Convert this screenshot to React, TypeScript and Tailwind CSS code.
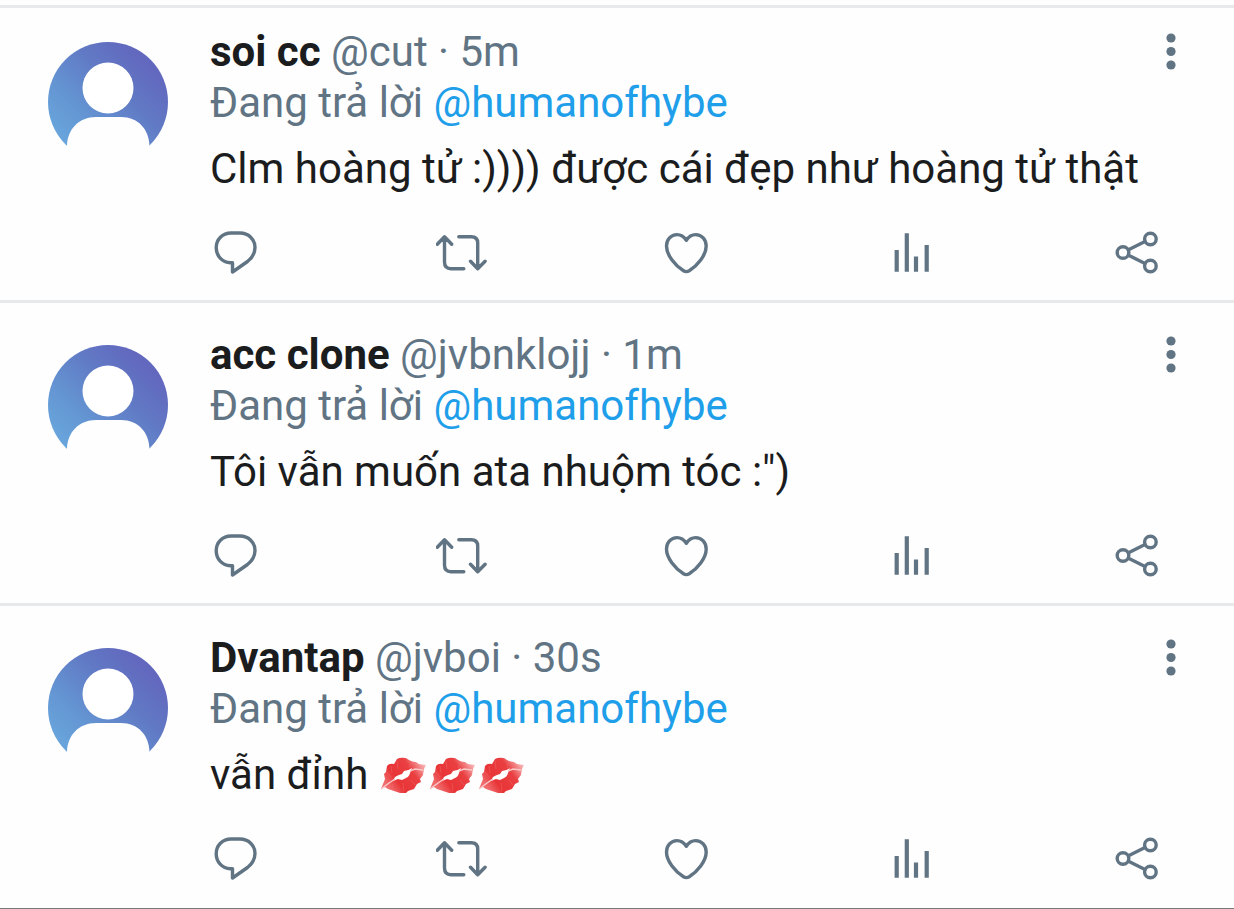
import type { ReactNode } from "react";

type Tweet = {
  id: string;
  name: string;
  handle: string;
  time: string;
  text: string;
  kisses?: number;
};

const REPLY_TO = "@humanofhybe";

const tweets: Tweet[] = [
  { id: "t1", name: "soi cc", handle: "@cut", time: "5m", text: "Clm hoàng tử :)))) được cái đẹp như hoàng tử thật" },
  { id: "t2", name: "acc clone", handle: "@jvbnklojj", time: "1m", text: "Tôi vẫn muốn ata nhuộm tóc :\")" },
  { id: "t3", name: "Dvantap", handle: "@jvboi", time: "30s", text: "vẫn đỉnh", kisses: 3 },
];

function Avatar({ id }: { id: string }) {
  return (
    <svg viewBox="0 0 120 120" className="size-[120px] shrink-0" aria-hidden="true">
      <defs>
        <linearGradient id={`bg-${id}`} x1="0" y1="0.85" x2="0.75" y2="0.1">
          <stop offset="0" stopColor="#6aabdf" />
          <stop offset="0.35" stopColor="#6496d3" />
          <stop offset="0.7" stopColor="#617ac5" />
          <stop offset="1" stopColor="#6268be" />
        </linearGradient>
        <clipPath id={`clip-${id}`}>
          <path d="M0 0H120V104H101.5C101 87 90 75 73 75H48C31 75 19.5 87 19 104H0Z" />
        </clipPath>
      </defs>
      <circle cx="60" cy="60" r="60" fill={`url(#bg-${id})`} clipPath={`url(#clip-${id})`} />
      <circle cx="60" cy="46" r="25.5" fill="#fff" />
    </svg>
  );
}

function KissMark({ id }: { id: string }) {
  return (
    <svg viewBox="0 0 46 38" className="h-[38px] w-[46px]" role="img" aria-label="kiss mark">
      <defs>
        <linearGradient id={id} x1="0.1" y1="0.7" x2="1" y2="0.2">
          <stop offset="0" stopColor="#f06b6c" />
          <stop offset="0.25" stopColor="#e83437" />
          <stop offset="0.65" stopColor="#ea3f41" />
          <stop offset="1" stopColor="#f9c4c4" />
        </linearGradient>
      </defs>
      <path
        d="M1 33L3 28L5 23L4 18L6 16L7 10Q9 7 14 8L17 3Q20 1 26 2L29 4Q32 6 36 6L39 8L46 9L44 13L43 19L40 23L41 26L37 28L34 33L28 35L26 37L20 37L14 35L8 33L5 31Z"
        fill={`url(#${id})`}
      />
      <path d="M13 25L15 21Q18 19 22 18L24 15Q28 15 32 12L30 17Q29 21 26 22L22 24L18 23Z" fill="#fff" />
      <path d="M1 33L9 27L15 23M30 15L35 13L43 14" fill="none" stroke="#f9c8c8" strokeWidth="1.5" />
      <path d="M11 10L12 17M17 5L18 13M31 6L29 12M13 28L12 33M23 27L24 35M31 24L35 29M7 16L11 21" stroke="#f06a6a" strokeWidth="1" opacity="0.5" />
    </svg>
  );
}

function ActionButton({ label, children }: { label: string; children: ReactNode }) {
  return (
    <button type="button" aria-label={label} className="size-[52px]">
      <svg
        viewBox="0 0 52 52"
        className="size-full"
        fill="none"
        stroke="currentColor"
        strokeWidth="3.4"
        strokeLinecap="round"
        strokeLinejoin="round"
        aria-hidden="true"
      >
        {children}
      </svg>
    </button>
  );
}

function TweetActions() {
  return (
    <div className="mt-[33px] mr-[29px] flex justify-between">
      <ActionButton label="Reply">
        <path d="M21 6H30C38.5 6 45 12.3 45 20.5C45 26 42 31 37.5 34.5L22.5 45V35.7H20.5C12 35.3 6.2 28.8 6.2 20.7C6.2 12.5 12.5 6 21 6Z" />
      </ActionButton>
      <ActionButton label="Retweet">
        <path d="M1.3 17.3L8.5 9.8L15.7 17.3M8.5 10.5V35Q8.5 41.7 15 41.7H27.8M22.8 9.7H35.3Q41.7 9.7 41.7 16V41M34.5 34.2L41.7 41.7L49.1 34.2" />
      </ActionButton>
      <ActionButton label="Like">
        <path d="M25.3 13.3C23 9.7 19.8 7.6 16 7.6C10 7.6 5.5 12.5 5.5 19C5.5 28 14 38.5 22.5 43.8Q25.3 45.5 28.2 43.8C36.7 38.5 45.2 28 45.2 19C45.2 12.5 40.7 7.6 34.7 7.6C30.9 7.6 27.6 9.7 25.3 13.3Z" />
      </ActionButton>
      <ActionButton label="View analytics">
        <path strokeLinecap="butt" strokeWidth="4.2" d="M9.7 23V44.7M19.8 6.3V44.7M29 29.5V44.7M39.7 18V44.7" />
      </ActionButton>
      <ActionButton label="Share">
        <circle cx="11" cy="25.5" r="5.8" />
        <circle cx="38.4" cy="12" r="5.8" />
        <circle cx="38.4" cy="39" r="5.8" />
        <path d="M16.5 22.8L33 14.6M16.5 28.2L33 36.4" />
      </ActionButton>
    </div>
  );
}

function TweetItem({ tweet }: { tweet: Tweet }) {
  return (
    <article className="flex items-start gap-[42px] border-b-[3px] border-[#e8e9ea] pt-[26px] pr-[41px] pb-[21px] pl-12 first:pt-[18px] last:border-b last:border-[#77797b] last:pb-[23px]">
      <div className="pt-4">
        <Avatar id={tweet.id} />
      </div>
      <div className="min-w-0 flex-1">
        <div className="flex items-start justify-between">
          <div>
            <p>
              <span className="font-bold text-[#1b1c1d]">{tweet.name}</span> {tweet.handle} · {tweet.time}
            </p>
            <p>
              Đang trả lời{" "}
              <a href="#" className="text-[#1f9eea]">
                {REPLY_TO}
              </a>
            </p>
          </div>
          <button type="button" aria-label="More options" className="h-[51px] w-11">
            <svg viewBox="0 0 44 51" className="size-full" fill="currentColor" aria-hidden="true">
              <circle cx="22" cy="12" r="4.6" />
              <circle cx="22" cy="25.5" r="4.6" />
              <circle cx="22" cy="39" r="4.6" />
            </svg>
          </button>
        </div>
        <div className="mt-[15px] flex items-center gap-3 text-[#1b1c1d]">
          <p>{tweet.text}</p>
          {tweet.kisses && (
            <span className="flex gap-[3px]">
              {Array.from({ length: tweet.kisses }, (_, i) => (
                <KissMark key={i} id={`kiss-${tweet.id}-${i}`} />
              ))}
            </span>
          )}
        </div>
        <TweetActions />
      </div>
    </article>
  );
}

export default function App() {
  return (
    <main className="bg-[#fefefe] pt-[5px] font-[Roboto,sans-serif] text-[42px] leading-[51px] text-[#617484]">
      <div className="border-t-[3px] border-[#e8e9ea]">
        {tweets.map((tweet) => (
          <TweetItem key={tweet.id} tweet={tweet} />
        ))}
      </div>
    </main>
  );
}
